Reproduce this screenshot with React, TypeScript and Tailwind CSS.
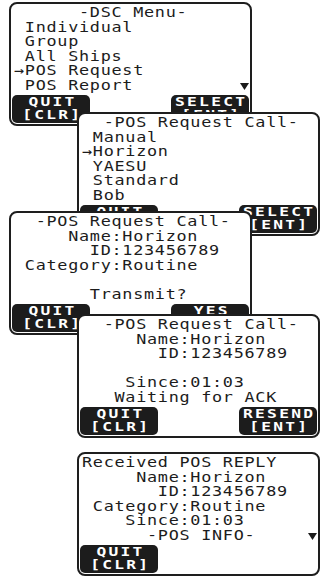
import React from "react";

type Btn = { top: string; bottom: string };

type ScreenProps = {
  lines: string[];
  left?: Btn;
  right?: Btn;
  moreLine?: number; // index of the line that shows the ▼ marker
  className?: string;
};

const MONO = "font-['DejaVu_Sans_Mono','Liberation_Mono',monospace]";

function DownMark() {
  return (
    <svg width="9" height="7" viewBox="0 0 9 7" className="shrink-0 translate-y-[2px]">
      <path d="M0 0 H9 L4.5 7 Z" fill="#1a1a1a" />
    </svg>
  );
}

function SoftKey({ btn }: { btn: Btn }) {
  return (
    <div
      className={`flex h-full w-[78px] flex-col items-center justify-start rounded-t-[5px] rounded-b-[5px] bg-[#1c1c1c] pt-[1px] text-white ${MONO} text-[13px] font-bold leading-[12.5px] tracking-[1.8px]`}
    >
      <span className="inline-block scale-x-[1.25] pl-[2px]">{btn.top}</span>
      <span className="inline-block scale-x-[1.25] pl-[2px]">{btn.bottom}</span>
    </div>
  );
}

function Screen({ lines, left, right, moreLine, className }: ScreenProps) {
  return (
    <div
      className={`flex h-[124px] w-[243px] flex-col overflow-hidden rounded-[8px] border-2 border-[#1e1e1e] bg-white ${className ?? ""}`}
    >
      {/* display lines */}
      <div className={`flex flex-col pl-[3px] pr-[1px] pt-[1px] ${MONO} text-[14px] leading-[14.5px] tracking-[0.6px] text-[#1c1c1c]`}>
        {lines.map((l, i) => (
          <div key={i} className="flex h-[14.5px] items-center justify-between">
            <span className="inline-block origin-left scale-x-[1.2] whitespace-pre">{l}</span>
            {moreLine === i && <DownMark />}
          </div>
        ))}
      </div>

      {/* soft keys */}
      <div className="mt-auto flex h-[29px] justify-between px-[1px] pb-[1px]">
        {left ? <SoftKey btn={left} /> : <div />}
        {right ? <SoftKey btn={right} /> : <div />}
      </div>
    </div>
  );
}

const QUIT = { top: "QUIT", bottom: "[CLR]" };

export default function App() {
  return (
    <div className="flex h-[579px] w-[323px] flex-col bg-white">
      <Screen
        className="relative z-10 ml-[9px] mt-[2px]"
        lines={["      -DSC Menu-", " Individual", " Group", " All Ships", "→POS Request", " POS Report"]}
        moreLine={5}
        left={QUIT}
        right={{ top: "SELECT", bottom: "[ENT]" }}
      />
      <Screen
        className="relative z-20 ml-[77px] mt-[-14px]"
        lines={["  -POS Request Call-", " Manual", "→Horizon", " YAESU", " Standard", " Bob"]}
        left={QUIT}
        right={{ top: "SELECT", bottom: "[ENT]" }}
      />
      <Screen
        className="relative z-30 ml-[9px] mt-[-25px]"
        lines={["  -POS Request Call-", "     Name:Horizon", "       ID:123456789", " Category:Routine", "", "       Transmit?"]}
        left={QUIT}
        right={{ top: "YES", bottom: "[ENT]" }}
      />
      <Screen
        className="relative z-40 ml-[77px] mt-[-21px]"
        lines={["  -POS Request Call-", "     Name:Horizon", "       ID:123456789", "", "    Since:01:03", "   Waiting for ACK"]}
        left={QUIT}
        right={{ top: "RESEND", bottom: "[ENT]" }}
      />
      <Screen
        className="ml-[77px] mt-[14px]"
        lines={["Received POS REPLY", "     Name:Horizon", "       ID:123456789", " Category:Routine", "    Since:01:03", "      -POS INFO-"]}
        moreLine={5}
        left={QUIT}
      />
    </div>
  );
}
